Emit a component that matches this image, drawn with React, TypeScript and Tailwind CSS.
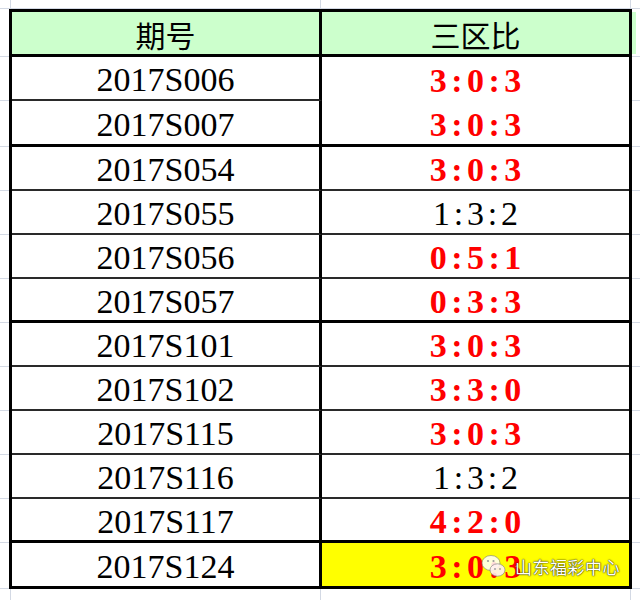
import React from "react";

type Row = {
  id: string;
  val: string;
  red: boolean;
  h: string;
  leftB: string;
  rightB: string;
  yellow?: boolean;
};

const rows: Row[] = [
  { id: "2017S006", val: "3:0:3", red: true, h: "h-[44px]", leftB: "border-b-2 border-b-[#2a2a2a]", rightB: "" },
  { id: "2017S007", val: "3:0:3", red: true, h: "h-[46px]", leftB: "border-b-[3px] border-b-black", rightB: "border-b-[3px] border-b-black" },
  { id: "2017S054", val: "3:0:3", red: true, h: "h-[44px]", leftB: "border-b-2 border-b-[#2a2a2a]", rightB: "border-b-2 border-b-[#2a2a2a]" },
  { id: "2017S055", val: "1:3:2", red: false, h: "h-[44px]", leftB: "border-b-2 border-b-[#2a2a2a]", rightB: "border-b-2 border-b-[#2a2a2a]" },
  { id: "2017S056", val: "0:5:1", red: true, h: "h-[44px]", leftB: "border-b-2 border-b-[#2a2a2a]", rightB: "border-b-2 border-b-[#2a2a2a]" },
  { id: "2017S057", val: "0:3:3", red: true, h: "h-[44px]", leftB: "border-b-[3px] border-b-black", rightB: "border-b-[3px] border-b-black" },
  { id: "2017S101", val: "3:0:3", red: true, h: "h-[44px]", leftB: "border-b-2 border-b-[#2a2a2a]", rightB: "border-b-2 border-b-[#2a2a2a]" },
  { id: "2017S102", val: "3:3:0", red: true, h: "h-[44px]", leftB: "border-b-2 border-b-[#2a2a2a]", rightB: "border-b-2 border-b-[#2a2a2a]" },
  { id: "2017S115", val: "3:0:3", red: true, h: "h-[44px]", leftB: "border-b-2 border-b-[#2a2a2a]", rightB: "border-b-2 border-b-[#2a2a2a]" },
  { id: "2017S116", val: "1:3:2", red: false, h: "h-[44px]", leftB: "border-b-2 border-b-[#2a2a2a]", rightB: "border-b-2 border-b-[#2a2a2a]" },
  { id: "2017S117", val: "4:2:0", red: true, h: "h-[44px]", leftB: "border-b-[3px] border-b-black", rightB: "border-b-[3px] border-b-black" },
  { id: "2017S124", val: "3:0:3", red: true, h: "h-[43px]", leftB: "", rightB: "", yellow: true },
];

const serif = { fontFamily: '"Liberation Serif", "Times New Roman", serif' };
const cjk = { fontFamily: '"Noto Sans CJK SC", "Noto Sans", sans-serif' };

function Ratio({ val, red }: { val: string; red: boolean }) {
  return (
    <span className={red ? "flex text-[#ff0000] font-bold" : "flex text-black"}>
      {val.split("").map((c, i) => (
        <span key={i} className={red ? "inline-block w-[18.6px] text-center" : "inline-block w-[17px] text-center"}>
          {c}
        </span>
      ))}
    </span>
  );
}

function Grid() {
  const ys = [9, 57, 101, 147, 191, 235, 279, 323, 367, 411, 455, 499, 543, 589];
  const c = "#d3d9e4";
  return (
    <svg className="absolute inset-0" width="640" height="600">
      <rect x="632" y="12" width="4" height="42" fill="#ccffcc" />
      {ys.map((y) => (
        <g key={y}>
          <line x1="0" y1={y - 0.5} x2="9" y2={y - 0.5} stroke={c} strokeWidth="1" />
          <line x1="632" y1={y - 0.5} x2="640" y2={y - 0.5} stroke={c} strokeWidth="1" />
        </g>
      ))}
      <line x1="9" y1="8.5" x2="632" y2="8.5" stroke={c} strokeWidth="1" />
      {[10.5, 320.5, 630.5].map((x) => (
        <g key={x}>
          <line x1={x} y1="0" x2={x} y2="9" stroke={c} strokeWidth="1" />
          <line x1={x} y1="589" x2={x} y2="600" stroke={c} strokeWidth="1" />
        </g>
      ))}
    </svg>
  );
}

function Watermark() {
  return (
    <div className="absolute left-[481px] top-[553px] flex items-center gap-[8px]">
      <svg width="26" height="26" viewBox="0 0 26 26">
        <ellipse cx="10" cy="10" rx="9" ry="7.5" fill="rgba(255,255,255,0.85)" stroke="rgba(120,120,120,0.6)" strokeWidth="1" />
        <ellipse cx="16.5" cy="17" rx="7.5" ry="6.2" fill="rgba(255,240,240,0.9)" stroke="rgba(120,120,120,0.6)" strokeWidth="1" />
        <circle cx="7" cy="8" r="1.1" fill="#9a9a9a" />
        <circle cx="12.5" cy="8" r="1.1" fill="#9a9a9a" />
        <circle cx="14" cy="16" r="0.9" fill="#9a9a9a" />
        <circle cx="19" cy="16" r="0.9" fill="#9a9a9a" />
      </svg>
      <span
        className="text-[17px] leading-none text-white tracking-[0.5px] [text-shadow:0_0_2px_rgba(0,0,0,0.8),0_0_1px_rgba(0,0,0,0.9)]"
        style={cjk}
      >
        山东福彩中心
      </span>
    </div>
  );
}

export default function App() {
  return (
    <div className="relative w-[640px] h-[600px] bg-white overflow-hidden">
      <Grid />
      <div className="relative ml-[9px] mt-[9px] w-[623px] border-[3px] border-black bg-white">
        <div className="flex h-[45px] bg-[#ccffcc] border-b-[3px] border-b-black">
          <div className="w-[310px] border-r-[3px] border-r-black flex items-center justify-center pt-[2px] text-[30px] leading-none text-black" style={cjk}>
            期号
          </div>
          <div className="flex-1 flex items-center justify-center pt-[2px] text-[30px] leading-none text-black" style={cjk}>
            三区比
          </div>
        </div>
        {rows.map((r) => (
          <div key={r.id} className={`flex ${r.h}`}>
            <div
              className={`w-[310px] border-r-[3px] border-r-black flex items-center justify-center pt-[4px] text-[34px] leading-none text-black ${r.leftB}`}
              style={serif}
            >
              {r.id}
            </div>
            <div
              className={`flex-1 flex items-center justify-center pt-[4px] text-[34px] leading-none ${r.rightB} ${r.yellow ? "bg-[#ffff00]" : ""}`}
              style={serif}
            >
              <Ratio val={r.val} red={r.red} />
            </div>
          </div>
        ))}
      </div>
      <Watermark />
    </div>
  );
}
